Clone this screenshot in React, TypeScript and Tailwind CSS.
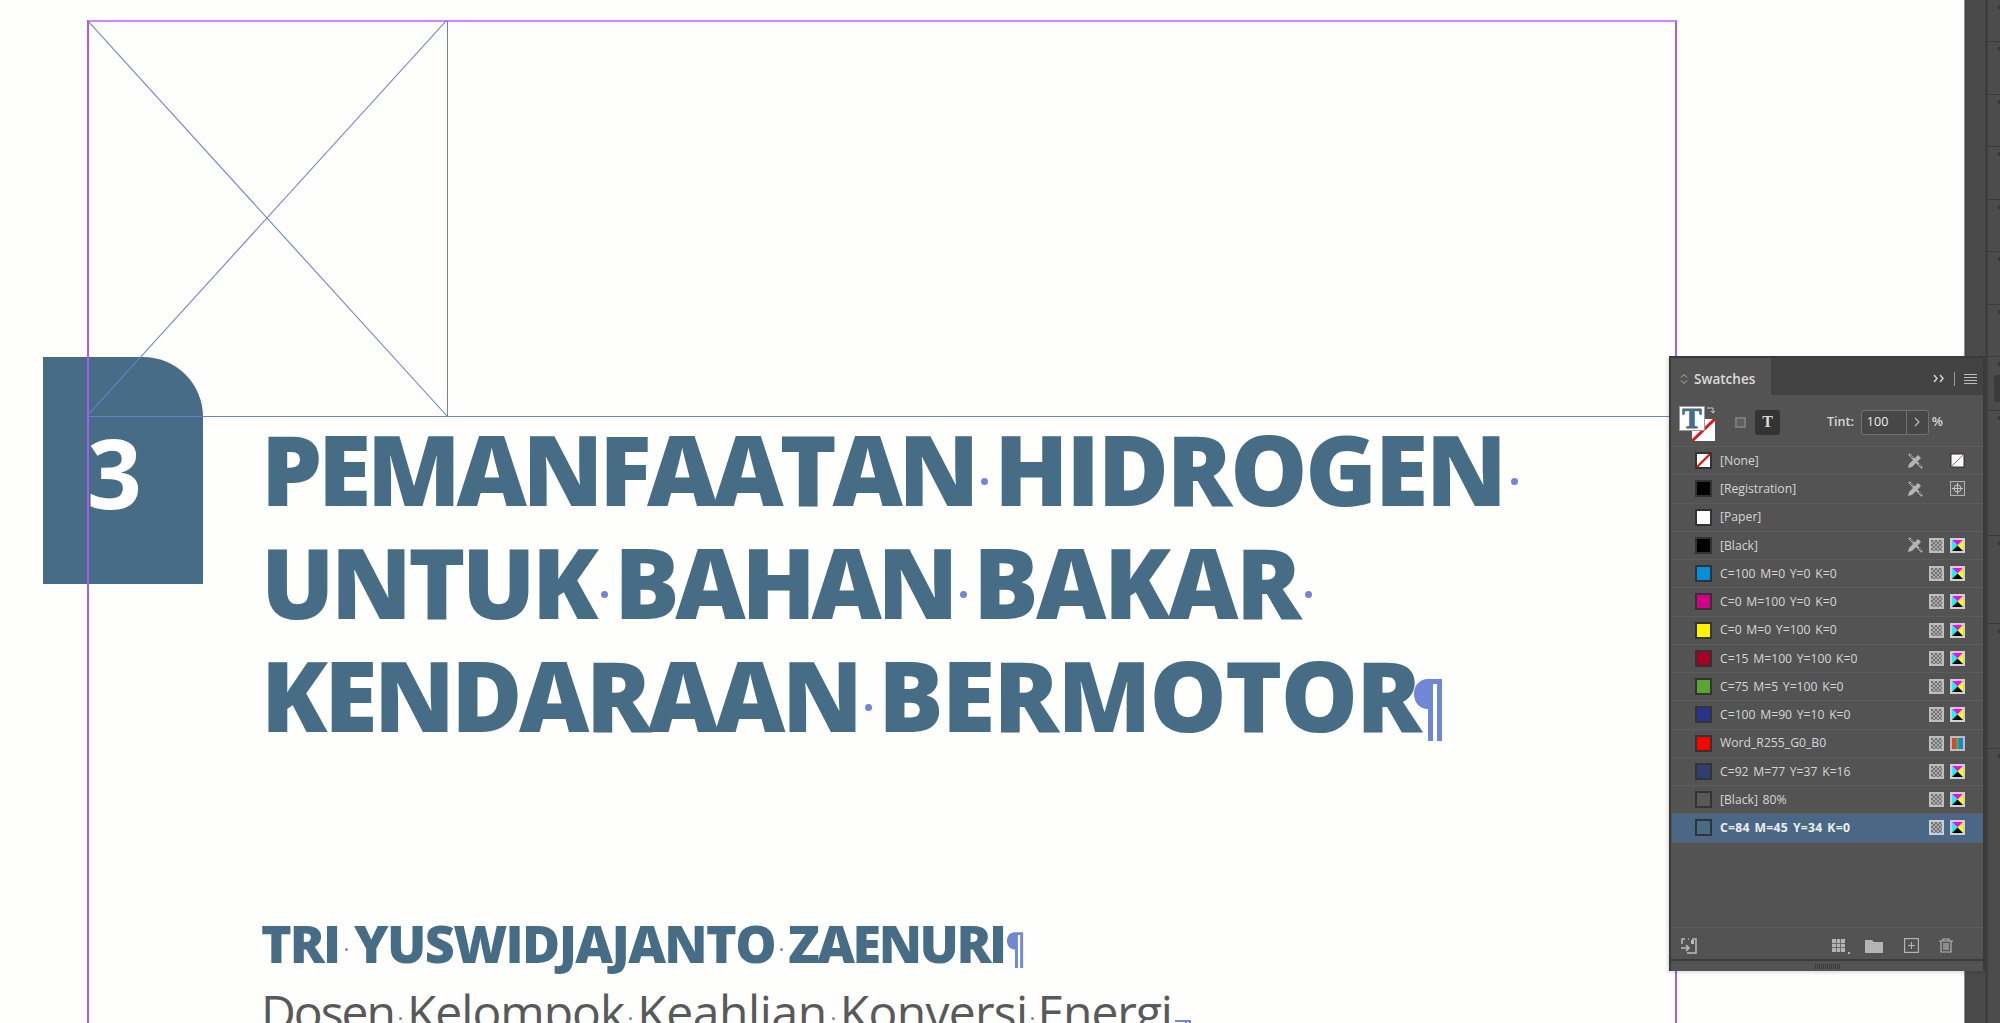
import React from 'react';

const uiFont = { fontFamily: '"Open Sans", sans-serif' };

const swatches = [
  { name: '[None]', color: 'none', pencil: true, mode: 'none' },
  { name: '[Registration]', color: '#000000', pencil: true, mode: 'reg' },
  { name: '[Paper]', color: '#ffffff', mode: '' },
  { name: '[Black]', color: '#000000', pencil: true, tone: true, mode: 'cmyk' },
  { name: 'C=100 M=0 Y=0 K=0', color: '#0090d7', tone: true, mode: 'cmyk' },
  { name: 'C=0 M=100 Y=0 K=0', color: '#d40088', tone: true, mode: 'cmyk' },
  { name: 'C=0 M=0 Y=100 K=0', color: '#fff200', tone: true, mode: 'cmyk' },
  { name: 'C=15 M=100 Y=100 K=0', color: '#a80024', tone: true, mode: 'cmyk' },
  { name: 'C=75 M=5 Y=100 K=0', color: '#5aa632', tone: true, mode: 'cmyk' },
  { name: 'C=100 M=90 Y=10 K=0', color: '#26348b', tone: true, mode: 'cmyk' },
  { name: 'Word_R255_G0_B0', color: '#ff0000', tone: true, mode: 'rgb' },
  { name: 'C=92 M=77 Y=37 K=16', color: '#2f4070', tone: true, mode: 'cmyk' },
  { name: '[Black] 80%', color: '#58595b', tone: true, mode: 'cmyk' },
  { name: 'C=84 M=45 Y=34 K=0', color: '#466d85', tone: true, mode: 'cmyk', selected: true },
];

const dockCells = [42, 53, 52, 53, 52, 53, 52, 54, 125, 88, 125, 284];

const Dot = ({ w, size, lift }: { w: string; size: string; lift: string }) => (
  <span className={`flex justify-center ${w}`}>
    <span className={`block rounded-full bg-[#6f87d4] ${size} ${lift}`} />
  </span>
);

const BigDot = () => <Dot w="w-[19px]" size="h-[7px] w-[7px]" lift="mt-[26px]" />;
const SmallDot = () => <Dot w="w-[13px]" size="h-[3px] w-[3px]" lift="mt-[13px]" />;

const Pilcrow = ({ className }: { className: string }) => (
  <svg className={className} viewBox="0 0 28 64" fill="#6f87d4">
    <path d="M14 2h14v62h-5V7h-4v57h-5V32C5 32 0 25 0 17S5 2 14 2z" />
  </svg>
);

const Pencil = () => (
  <svg width="16" height="16" viewBox="0 0 16 16" className="shrink-0">
    <path d="M1 15l1-4L11 2l3 3-9 9z" fill="#b4b4b4" />
    <path d="M2 1l13 14" stroke="#b4b4b4" strokeWidth="2" />
    <path d="M3 2l3 3M12 11l2 3" stroke="#535353" strokeWidth="1" />
  </svg>
);

const Halftone = ({ selected }: { selected?: boolean }) => (
  <svg width="15" height="15" viewBox="0 0 15 15" className="shrink-0" shapeRendering="crispEdges">
    <defs>
      <pattern id="tone" width="4" height="4" patternUnits="userSpaceOnUse">
        <rect width="4" height="4" fill="#ababab" />
        <rect width="2" height="2" fill="#727272" />
        <rect x="2" y="2" width="2" height="2" fill="#727272" />
      </pattern>
    </defs>
    <rect width="15" height="15" fill={selected ? '#c6d0da' : '#bdbdbd'} />
    <rect x="2" y="2" width="11" height="11" fill="url(#tone)" />
  </svg>
);

const ModeIcon = ({ mode }: { mode: string }) => {
  if (mode === 'none') {
    return (
      <svg width="15" height="15" viewBox="0 0 15 15" className="shrink-0">
        <rect x="0.5" y="0.5" width="14" height="14" fill="#2c2c2c" />
        <rect x="1.5" y="1.5" width="12" height="12" fill="#ffffff" />
        <path d="M2 13L13 2" stroke="#ef5050" strokeWidth="1" />
      </svg>
    );
  }
  if (mode === 'reg') {
    return (
      <svg width="15" height="15" viewBox="0 0 15 15" className="shrink-0" fill="none">
        <rect x="0.5" y="0.5" width="14" height="14" fill="#5b5b5b" stroke="#b0b0b0" />
        <circle cx="7.5" cy="7.5" r="3.5" stroke="#c4c4c4" />
        <path d="M7.5 2v11M2 7.5h11" stroke="#c4c4c4" />
      </svg>
    );
  }
  if (mode === 'rgb') {
    return (
      <svg width="15" height="15" viewBox="0 0 15 15" className="shrink-0">
        <rect width="15" height="15" fill="#bdbdbd" />
        <rect x="2" y="2" width="4" height="11" fill="#e0403c" />
        <rect x="6" y="2" width="3" height="11" fill="#3fae49" />
        <rect x="9" y="2" width="4" height="11" fill="#1f7fdc" />
      </svg>
    );
  }
  if (mode === 'cmyk') {
    return (
      <svg width="15" height="15" viewBox="0 0 15 15" className="shrink-0">
        <rect width="15" height="15" fill="#d0d0d0" />
        <path d="M2 2h11L7.5 7.5z" fill="#ff00ff" />
        <path d="M2 2v11l5.5-5.5z" fill="#00ffff" />
        <path d="M13 2v11L7.5 7.5z" fill="#ffff00" />
        <path d="M2 13h11L7.5 7.5z" fill="#000000" />
      </svg>
    );
  }
  return null;
};

const SwatchRow = ({ item }: { item: (typeof swatches)[number] }) => (
  <div
    className={`flex h-[28.25px] items-center border-b border-[#5c5c5c] pl-[23px] pr-[18px] ${
      item.selected ? 'bg-[#4a6885]' : ''
    }`}
  >
    <span
      className="relative h-[17px] w-[17px] shrink-0 overflow-hidden border-2 border-[#333333]"
      style={{ backgroundColor: item.color === 'none' ? '#ffffff' : item.color }}
    >
      {item.color === 'none' && (
        <svg viewBox="0 0 13 13" className="absolute inset-0 h-full w-full">
          <path d="M0 13L13 0" stroke="#ff0000" strokeWidth="2" />
        </svg>
      )}
    </span>
    <span
      className={`ml-[8px] flex-1 whitespace-nowrap pt-[1px] text-[12.2px] [word-spacing:1.5px] ${
        item.selected ? 'font-bold tracking-[0.25px] text-[#eeeeee]' : 'text-[#d6d6d6]'
      }`}
    >
      {item.name}
    </span>
    <span className="flex items-center justify-end">
      {item.pencil && <Pencil />}
      <span className="ml-[6px] flex w-[15px] justify-center">{item.tone && <Halftone selected={item.selected} />}</span>
      <span className="ml-[6px] flex w-[15px] justify-center">{item.mode && <ModeIcon mode={item.mode} />}</span>
    </span>
  </div>
);

const SwatchesPanel = () => (
  <div
    className="absolute left-[1669px] top-[356px] flex h-[615px] w-[316px] flex-col border-x-2 border-t-2 border-[#3a3a3a] bg-[#535353] shadow-[-2px_2px_3px_rgba(0,0,0,0.12)]"
    style={uiFont}
  >
    <div className="flex h-[37px] shrink-0 bg-[#424242]">
      <div className="flex w-[100px] items-center gap-[6px] bg-[#535353] pl-[9px] pt-[5px]">
        <svg width="8" height="12" viewBox="0 0 8 12" fill="none" stroke="#b8b8b8" strokeWidth="1">
          <path d="M1 4.5L4 1.5l3 3M1 7.5l3 3 3-3" />
        </svg>
        <span className="text-[13.5px] font-semibold text-[#dcdcdc]">Swatches</span>
      </div>
      <div className="flex flex-1 items-center justify-end gap-[9px] pr-[6px] pt-[4px]">
        <svg width="12" height="9" viewBox="0 0 12 9" fill="none" stroke="#d0d0d0" strokeWidth="1.5">
          <path d="M1 1l3 3.5L1 8M7 1l3 3.5L7 8" />
        </svg>
        <span className="h-[14px] w-px bg-[#9a9a9a]" />
        <span className="flex w-[13px] flex-col gap-[2px]">
          <span className="h-px bg-[#bdbdbd]" />
          <span className="h-px bg-[#bdbdbd]" />
          <span className="h-px bg-[#bdbdbd]" />
          <span className="h-px bg-[#bdbdbd]" />
        </span>
      </div>
    </div>

    <div className="flex h-[52px] shrink-0 items-center border-b border-[#5c5c5c] pl-[8px] pt-[3px]">
      <div className="relative mt-[2px] h-[35px] w-[36px] shrink-0">
        <div className="absolute bottom-0 right-0 h-[22px] w-[23px] overflow-hidden bg-white">
          <svg viewBox="0 0 23 22" className="h-full w-full">
            <path d="M0 22L23 0" stroke="#e5141c" strokeWidth="3" />
          </svg>
        </div>
        <div className="absolute left-0 top-0 flex h-[25px] w-[26px] items-center justify-center border border-[#9a9a9a] bg-white font-['Liberation_Serif',serif] text-[29px] font-bold leading-none text-[#466d85] [-webkit-text-stroke:1px_#466d85]">
          T
        </div>
        <svg className="absolute right-0 top-0" width="9" height="9" viewBox="0 0 9 9" fill="none" stroke="#c8c8c8">
          <path d="M1 2h6v5M5 5l2 2 2-2" />
        </svg>
      </div>
      <span className="ml-[20px] h-[11px] w-[11px] border-2 border-[#7a7a7a] bg-[#5e5e5e]" />
      <span className="ml-[9px] flex h-[25px] w-[25px] items-center justify-center rounded-[3px] bg-[#333333] font-['Liberation_Serif',serif] text-[16px] font-bold text-[#d8d8d8]">
        T
      </span>
      <span className="ml-[47px] text-[12.5px] font-semibold text-[#d6d6d6]">Tint:</span>
      <div className="ml-[7px] flex h-[25px] w-[68px] items-center rounded-[3px] border border-[#717171] bg-[#474747] text-[12.5px] text-[#eeeeee]">
        <span className="w-[44px] pl-[5px]">100</span>
        <span className="flex h-full flex-1 items-center justify-center border-l border-[#717171]">
          <svg width="6" height="10" viewBox="0 0 6 10" fill="none" stroke="#bdbdbd" strokeWidth="1.2">
            <path d="M1 1l4 4-4 4" />
          </svg>
        </span>
      </div>
      <span className="ml-[3px] text-[13px] font-semibold text-[#d6d6d6]">%</span>
    </div>

    <div className="flex-1 border-b border-[#5c5c5c] pl-[1px]">
      {swatches.map((item) => (
        <SwatchRow key={item.name} item={item} />
      ))}
    </div>

    <div className="flex h-[31px] shrink-0 items-center pl-[9px] pr-[30px] pt-[4px]">
      <svg width="17" height="16" viewBox="0 0 17 16" fill="none" stroke="#bcbcbc" strokeWidth="1.5">
        <path d="M2 6V1h3M8 1h1M12 1h4v14H7M1 10h8M6 7l3 3-3 3" />
        <rect x="11" y="2" width="3" height="4" fill="#bcbcbc" stroke="none" />
      </svg>
      <span className="flex-1" />
      <svg width="20" height="16" viewBox="0 0 20 16">
        <rect x="1" y="1" width="13" height="13" fill="#b4b4b4" />
        <path d="M5.5 1v13M9.5 1v13M1 5.5h13M1 9.5h13" stroke="#6a6a6a" strokeWidth="1" />
        <rect x="17" y="14" width="2" height="2" fill="#b4b4b4" />
      </svg>
      <svg className="ml-[14px]" width="18" height="14" viewBox="0 0 18 14" fill="#b4b4b4">
        <path d="M0 1h7l2 2h9v11H0z" />
      </svg>
      <svg className="ml-[21px]" width="15" height="15" viewBox="0 0 15 15" fill="none" stroke="#b4b4b4" strokeWidth="1.2">
        <rect x="0.6" y="0.6" width="13.8" height="13.8" />
        <path d="M7.5 4v7M4 7.5h7" />
      </svg>
      <svg className="ml-[20px]" width="14" height="15" viewBox="0 0 14 15" fill="none" stroke="#b4b4b4" strokeWidth="1.2">
        <path d="M0 3h14M4 3V1h6v2M2 3v11h10V3M5 5v7M7 5v7M9 5v7" />
      </svg>
    </div>

    <div className="flex h-[12px] shrink-0 items-center justify-center border-t-2 border-[#3a3a3a]">
      <span className="flex gap-px">
        {Array.from({ length: 13 }).map((_, i) => (
          <span key={i} className="h-[5px] w-px bg-[#3a3a3a]" />
        ))}
      </span>
    </div>
  </div>
);

const Word = ({ children, className }: { children: string; className?: string }) => (
  <span className={className}>{children}</span>
);

export default function App() {
  return (
    <div className="flex h-[1023px] w-[2000px] overflow-hidden bg-[#464646]">
      {/* document page */}
      <div className="relative h-full w-[1964px] shrink-0 overflow-hidden bg-[#fefefc]" style={uiFont}>
        <div className="absolute left-[43px] top-[357px] h-[227px] w-[160px] rounded-tr-[60px] bg-[#466d85]" />
        <div className="absolute left-[87px] top-[417px] text-[96px] font-bold leading-[110px] text-white">3</div>

        <div className="absolute left-[87px] top-[20px] h-[1003px] w-[1590px] border-x-2 border-t-2 border-x-[#a65cf2] border-t-[#e07dfb]" />
        <div className="absolute left-[447px] top-[21px] h-[396px] w-[1px] bg-[#6a80d8]" />
        <div className="absolute left-[87px] top-[416px] h-[1px] w-[1583px] bg-[#6a80d8]" />
        <svg className="absolute left-[87px] top-[20px]" width="361" height="397" fill="none" stroke="#6a80d8" strokeWidth="1.1">
          <path d="M0 0L360 396M360 0L0 396" />
        </svg>

        <div className="absolute left-[261px] top-[412px] flex flex-col font-extrabold text-[#466d85]">
          <div className="flex h-[113px] items-center text-[97px]">
            <Word className="tracking-[-4.3px]">PEMANFAATAN</Word>
            <BigDot />
            <Word className="tracking-[-2.2px]">HIDROGEN</Word>
            <BigDot />
          </div>
          <div className="flex h-[113px] items-center text-[97px]">
            <Word className="tracking-[-3.5px]">UNTUK</Word>
            <BigDot />
            <Word className="tracking-[-4.3px]">BAHAN</Word>
            <BigDot />
            <Word className="tracking-[-2.5px]">BAKAR</Word>
            <BigDot />
          </div>
          <div className="flex h-[113px] items-center text-[97px]">
            <Word className="tracking-[-3.5px]">KENDARAAN</Word>
            <BigDot />
            <Word className="tracking-[-1.7px]">BERMOTOR</Word>
            <Pilcrow className="ml-[-6px] mt-[28px] h-[64px] w-[28px]" />
          </div>
        </div>

        <div className="absolute left-[261px] top-[907px] flex flex-col text-[#466d85]">
          <div className="flex h-[72px] items-center text-[52px] font-extrabold tracking-[-2px]">
            <Word>TRI</Word>
            <Dot w="w-[15px]" size="h-[3px] w-[3px]" lift="mt-[13px]" />
            <Word className="tracking-[-1.6px]">YUSWIDJAJANTO</Word>
            <SmallDot />
            <Word className="tracking-[-2.5px]">ZAENURI</Word>
            <Pilcrow className="ml-[1px] mt-[12px] h-[37px] w-[18px]" />
          </div>
          <div className="mt-[3px] flex h-[60px] items-center text-[48px] tracking-[-1.1px] text-[#58595b]">
            <Word className="tracking-[-2px]">Dosen</Word>
            <SmallDot />
            <Word className="tracking-[-1px]">Kelompok</Word>
            <SmallDot />
            <Word className="tracking-[-0.4px]">Keahlian</Word>
            <SmallDot />
            <Word className="tracking-[-0.7px]">Konversi</Word>
            <Dot w="w-[10px]" size="h-[3px] w-[3px]" lift="mt-[13px]" />
            <Word>Energi</Word>
            <svg className="ml-[3px] mt-[26px]" width="16" height="10" viewBox="0 0 16 10" fill="none" stroke="#6f87d4" strokeWidth="2">
              <path d="M0 1h15v9M11 1v9" />
            </svg>
          </div>
        </div>
      </div>

      {/* dock gutter */}
      <div className="h-full w-[24px] shrink-0 border-l border-[#8a8a8a] border-r-[3px] border-r-[#3e3e3e] bg-[#4a4a4a]" />

      {/* collapsed dock */}
      <div className="flex h-full flex-1 flex-col overflow-hidden bg-[#4c4c4c]">
        {dockCells.map((height, i) => (
          <div
            key={i}
            className="flex shrink-0 justify-end border-b border-[#3a3a3a] pt-[5px]"
            style={{ height }}
          >
            <span className="h-[4px] w-[2px] bg-[#383838]" />
          </div>
        ))}
      </div>

      {/* docked field inside the collapsed strip */}
      <div className="absolute left-[1994px] top-[375px] h-[27px] w-[6px] rounded-l-[3px] bg-[#3b3b3b]" />

      <SwatchesPanel />
    </div>
  );
}
